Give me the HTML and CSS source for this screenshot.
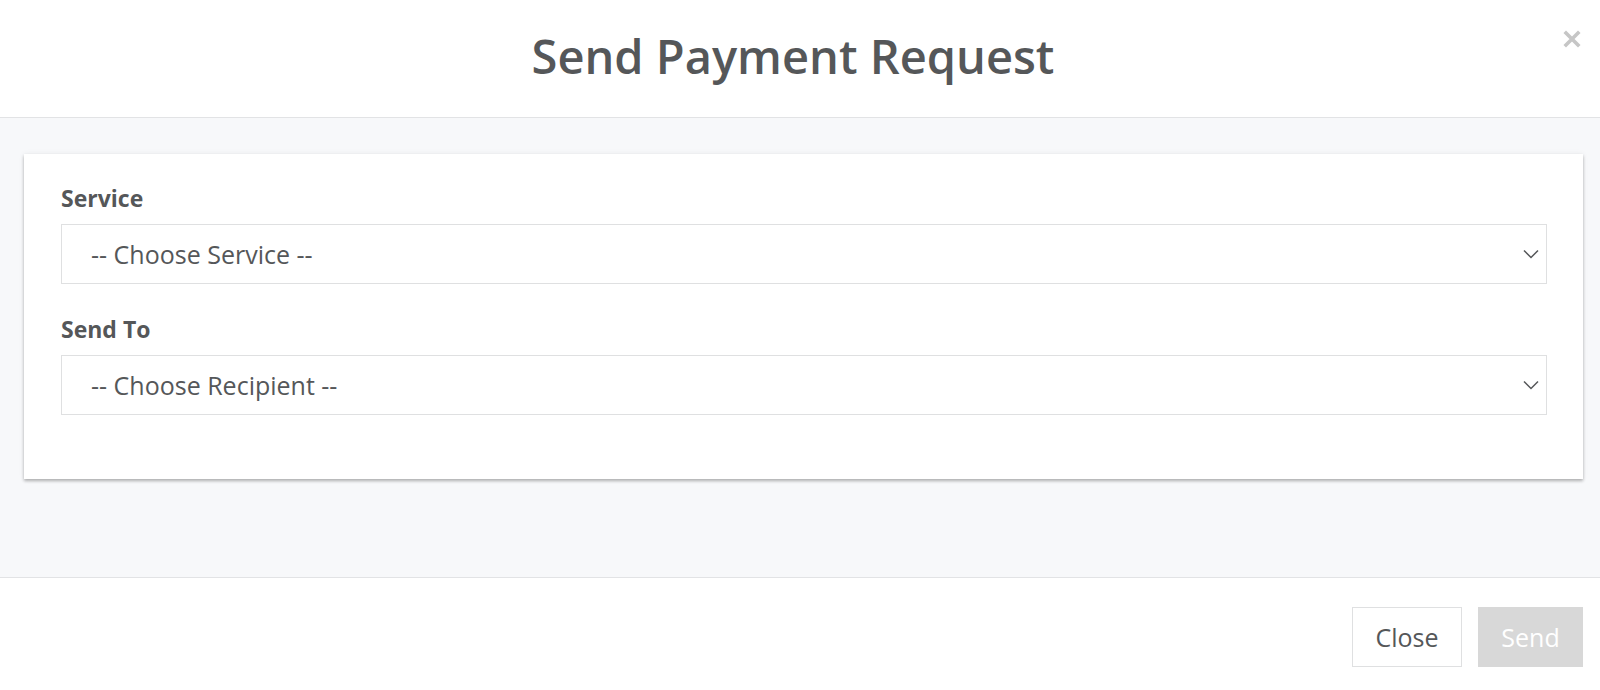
FILE: index.html
```html
<!DOCTYPE html>
<html lang="en">
<head>
<meta charset="utf-8">
<title>Send Payment Request</title>
<link rel="stylesheet" href="styles.css">
</head>
<body>
<div class="modal">
  <header class="modal-header">
    <h1 class="modal-title">Send Payment Request</h1>
    <button class="close-x" aria-label="Close">
      <svg width="18" height="18" viewBox="0 0 18 18"><path d="M3 3L15 15M15 3L3 15" stroke="#c6c6c6" stroke-width="3.6" stroke-linecap="square" fill="none"/></svg>
    </button>
  </header>
  <main class="modal-body">
    <div class="card">
      <div class="field">
        <label class="field-label">Service</label>
        <div class="select">
          <span class="select-text">-- Choose Service --</span>
          <svg class="chevron" width="16" height="10" viewBox="0 0 16 10"><path d="M1 1.5L8 8.5L15 1.5" stroke="#555759" stroke-width="1.5" fill="none"/></svg>
        </div>
      </div>
      <div class="field">
        <label class="field-label">Send To</label>
        <div class="select">
          <span class="select-text">-- Choose Recipient --</span>
          <svg class="chevron" width="16" height="10" viewBox="0 0 16 10"><path d="M1 1.5L8 8.5L15 1.5" stroke="#555759" stroke-width="1.5" fill="none"/></svg>
        </div>
      </div>
    </div>
  </main>
  <footer class="modal-footer">
    <button class="btn btn-close">Close</button>
    <button class="btn btn-send">Send</button>
  </footer>
</div>
</body>
</html>
```
FILE: styles.css
```css
* { box-sizing: border-box; }
html, body { margin: 0; padding: 0; }
body {
  width: 1600px;
  height: 690px;
  overflow: hidden;
  background: #fff;
  font-family: "Open Sans", "Noto Sans", sans-serif;
  color: #555759;
}
.modal { display: flex; flex-direction: column; height: 690px; }
.modal-header {
  position: relative;
  height: 118px;
  border-bottom: 1px solid #e2e3e5;
  display: flex;
  align-items: center;
  justify-content: center;
  padding: 0 30px 6px 16px;
}
.modal-title {
  margin: 0;
  font-size: 47px;
  font-weight: 600;
  line-height: 60px;
  color: #555759;
}
.close-x {
  position: absolute;
  top: 30px;
  right: 19px;
  width: 18px;
  height: 18px;
  padding: 0;
  border: 0;
  background: none;
  display: flex;
}
.modal-body {
  background: #f7f8fa;
  padding: 36px 17px 98px 24px;
  border-bottom: 1px solid #e2e3e5;
}
.card {
  background: #fff;
  padding: 29px 36px 64px 37px;
  box-shadow: 0 2px 3px rgba(0,0,0,0.28), 0 0 6px rgba(0,0,0,0.06);
  display: flex;
  flex-direction: column;
  gap: 30px;
}
.field { display: flex; flex-direction: column; gap: 11px; }
.field-label {
  font-size: 23px;
  font-weight: 700;
  line-height: 30px;
  color: #555759;
}
.select {
  height: 60px;
  border: 1px solid #dfe0e1;
  display: flex;
  align-items: center;
  justify-content: space-between;
  padding: 0 7px 0 29px;
}
.select-text { font-size: 25px; line-height: 32px; color: #555759; }
.chevron { display: block; }
.modal-footer {
  flex: 1;
  display: flex;
  justify-content: flex-end;
  align-items: flex-start;
  gap: 16px;
  padding: 29px 17px 0 0;
}
.btn {
  height: 60px;
  font-family: "Open Sans", "Noto Sans", sans-serif;
  font-size: 25px;
  padding: 0;
  cursor: pointer;
}
.btn-close {
  width: 110px;
  background: #fff;
  border: 1px solid #dfe0e1;
  color: #555759;
}
.btn-send {
  width: 105px;
  background: #d8d8d8;
  border: 0;
  color: #fff;
}
```
